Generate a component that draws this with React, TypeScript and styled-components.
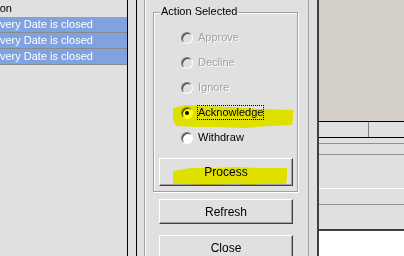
import React from 'react'
import styled, { createGlobalStyle } from 'styled-components'

type Action = { label: string; disabled?: boolean; checked?: boolean }

const actions: Action[] = [
  { label: 'Approve', disabled: true },
  { label: 'Decline', disabled: true },
  { label: 'Ignore', disabled: true },
  { label: 'Acknowledge', checked: true },
  { label: 'Withdraw' },
]

const exceptions = ['Delivery Date is closed', 'Delivery Date is closed', 'Delivery Date is closed']

const App: React.FC = () => {
  return (
    <Screen>
      <GlobalStyle />
      <ListPanel>
        <ListHeader>
          <Clipped $shift={26}>Reason</Clipped>
        </ListHeader>
        {exceptions.map((text, i) => (
          <ListRow key={i}>
            <Clipped $shift={19}>{text}</Clipped>
          </ListRow>
        ))}
      </ListPanel>
      <Gutter />
      <MiddlePane>
        <InnerFrame>
          <GroupBox>
            <Legend>Action Selected</Legend>
            {actions.map(a => (
              <RadioRow key={a.label}>
                <RadioCircle $checked={a.checked} $disabled={a.disabled} />
                <RadioLabel $disabled={a.disabled} $focused={a.checked}>
                  {a.label}
                </RadioLabel>
              </RadioRow>
            ))}
            <Button $tall>Process</Button>
          </GroupBox>
          <SideButton>Refresh</SideButton>
          <SideButton $gap={11}>Close</SideButton>
        </InnerFrame>
      </MiddlePane>
      <RightPanel>
        <Canvas />
        <TabRow>
          <TabCell />
          <TabCell $last />
        </TabRow>
        <Band $height={5} $line='#909090' />
        <Band $height={10} $line='#909090' />
        <Band $height={33} $line='#ffffff' />
        <Band $height={15} $line='#909090' />
        <Band $height={24} $line='#404040' $lineWidth={2} />
        <BlankArea />
      </RightPanel>
      <Marker viewBox='0 0 404 256'>
        <path d='M173,108 L186,105 L205,106 L230,107 L262,109 L293,110 L293,118 L292,125 L270,126 L245,128 L215,127 L195,127 L176,126 L173,120 Z' />
        <path d='M173,171 L190,168 L215,168 L235,167 L260,168 L287,168 L287,176 L286,184 L262,184 L250,185 L238,184 L205,185 L180,184 L173,184 Z' />
      </Marker>
    </Screen>
  )
}

const GlobalStyle = createGlobalStyle`
  html, body {
    margin: 0;
    padding: 0;
  }
  body {
    background: #e0e0e0;
    font-family: 'Liberation Sans', Arial, sans-serif;
    font-size: 11px;
  }
`

const Screen = styled.div`
  position: relative;
  display: flex;
  width: 404px;
  height: 256px;
  overflow: hidden;
  background: #e0e0e0;
  color: #000;
`

const ListPanel = styled.div`
  box-sizing: border-box;
  display: flex;
  flex-direction: column;
  flex: none;
  width: 128px;
  border-right: 1px solid #000;
  overflow: hidden;
`

const ListHeader = styled.div`
  height: 17px;
  line-height: 17px;
  white-space: nowrap;
  overflow: hidden;
`

const ListRow = styled.div`
  height: 15px;
  line-height: 15px;
  background: #7ea3df;
  border-bottom: 1px solid #8a8a8a;
  color: #fff;
  white-space: nowrap;
  overflow: hidden;
`

const Clipped = styled.span<{ $shift: number }>`
  display: inline-block;
  margin-left: ${p => -p.$shift}px;
`

const Gutter = styled.div`
  flex: none;
  width: 8px;
`

const MiddlePane = styled.div`
  box-sizing: border-box;
  display: flex;
  flex: none;
  width: 183px;
  padding: 0 8px 0 7px;
  border-left: 1px solid #000;
  border-right: 2px solid #404040;
`

const InnerFrame = styled.div`
  box-sizing: border-box;
  display: flex;
  flex-direction: column;
  width: 165px;
  padding: 12px 10px 0 8px;
  border-left: 1px solid #a0a0a0;
  border-right: 1px solid #a0a0a0;
  box-shadow: inset 1px 0 #fff;
`

const GroupBox = styled.div`
  position: relative;
  display: flex;
  flex-direction: column;
  padding: 12px 0 5px 0;
  border: 1px solid #a0a0a0;
  box-shadow: 1px 1px #fff, inset 1px 1px #fff;
`

const Legend = styled.div`
  position: absolute;
  top: -8px;
  left: 6px;
  padding: 0 1px;
  line-height: 13px;
  background: #e0e0e0;
`

const RadioRow = styled.div`
  display: flex;
  align-items: center;
  height: 25px;
  padding-left: 27px;
`

const RadioCircle = styled.span<{ $checked?: boolean; $disabled?: boolean }>`
  position: relative;
  box-sizing: border-box;
  flex: none;
  width: 12px;
  height: 12px;
  border-radius: 50%;
  border: 1px solid;
  border-color: #808080 #fff #fff #808080;
  background: ${p => (p.$disabled ? '#e0e0e0' : '#fff')};
  box-shadow: inset 1px 1px #404040;
  ${p =>
    p.$checked &&
    `
    &::after {
      content: '';
      position: absolute;
      left: 3px;
      top: 3px;
      width: 4px;
      height: 4px;
      border-radius: 50%;
      background: #000;
    }
  `}
`

const RadioLabel = styled.span<{ $disabled?: boolean; $focused?: boolean }>`
  margin-left: 4px;
  border: 1px ${p => (p.$focused ? 'dotted #000' : 'solid transparent')};
  line-height: 13px;
  color: ${p => (p.$disabled ? '#a0a0a0' : '#000')};
  text-shadow: ${p => (p.$disabled ? '1px 1px #fff' : 'none')};
`

const Button = styled.div<{ $tall?: boolean }>`
  box-sizing: border-box;
  display: flex;
  align-items: center;
  justify-content: center;
  width: 134px;
  height: ${p => (p.$tall ? 28 : 25)}px;
  margin: 8px 0 0 5px;
  border: 1px solid;
  border-color: #fff #404040 #404040 #fff;
  box-shadow: inset -1px -1px #a0a0a0;
  background: #e0e0e0;
  font-size: 12px;
`

const SideButton = styled(Button)<{ $gap?: number }>`
  flex: none;
  margin: ${p => p.$gap ?? 7}px 0 0 6px;
`

const RightPanel = styled.div`
  display: flex;
  flex-direction: column;
  flex: 1;
`

const Canvas = styled.div`
  flex: none;
  height: 121px;
  background: #d4d0c8;
`

const TabRow = styled.div`
  display: flex;
  flex: none;
  height: 15px;
  border-top: 1px solid #000;
  border-bottom: 1px solid #000;
`

const TabCell = styled.div<{ $last?: boolean }>`
  width: ${p => (p.$last ? 'auto' : '49px')};
  flex: ${p => (p.$last ? 1 : 'none')};
  border-right: ${p => (p.$last ? 'none' : '1px solid #808080')};
`

const Band = styled.div<{ $height: number; $line: string; $lineWidth?: number }>`
  flex: none;
  height: ${p => p.$height}px;
  border-bottom: ${p => p.$lineWidth ?? 1}px solid ${p => p.$line};
`

const BlankArea = styled.div`
  flex: 1;
  background: #fff;
`

const Marker = styled.svg`
  position: absolute;
  left: 0;
  top: 0;
  width: 404px;
  height: 256px;
  pointer-events: none;
  mix-blend-mode: multiply;
  fill: #ffff00;
`

export default App
